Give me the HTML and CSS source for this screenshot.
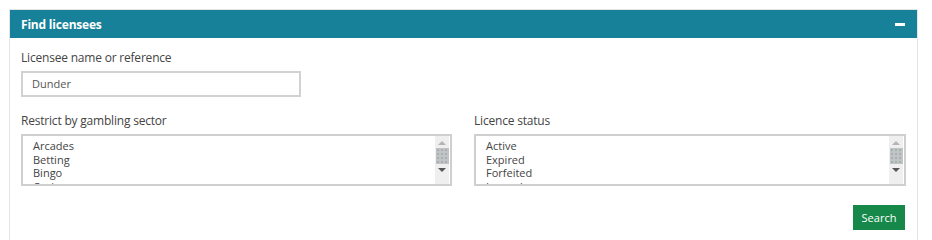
FILE: index.html
```html
<!DOCTYPE html>
<html lang="en">
<head>
<meta charset="utf-8">
<title>Find licensees</title>
<link rel="stylesheet" href="styles.css">
</head>
<body>
<div class="page">
  <section class="panel">
    <header class="panel-head">
      <h2 class="panel-title">Find licensees</h2>
      <span class="collapse" aria-label="Collapse"></span>
    </header>
    <div class="panel-body">
      <div class="field">
        <label class="label">Licensee name or reference</label>
        <div class="text-input">Dunder</div>
      </div>
      <div class="cols">
        <div class="field">
          <label class="label">Restrict by gambling sector</label>
          <div class="listbox">
            <ul class="options">
              <li>Arcades</li>
              <li>Betting</li>
              <li>Bingo</li>
              <li>Casino</li>
            </ul>
            <div class="scrollbar">
              <span class="arrow up"></span>
              <span class="thumb"></span>
              <span class="arrow down"></span>
            </div>
          </div>
        </div>
        <div class="field">
          <label class="label">Licence status</label>
          <div class="listbox">
            <ul class="options">
              <li>Active</li>
              <li>Expired</li>
              <li>Forfeited</li>
              <li>Lapsed</li>
            </ul>
            <div class="scrollbar">
              <span class="arrow up"></span>
              <span class="thumb"></span>
              <span class="arrow down"></span>
            </div>
          </div>
        </div>
      </div>
      <div class="actions">
        <button class="btn-search" type="button">Search</button>
      </div>
    </div>
  </section>
</div>
</body>
</html>
```

FILE: styles.css
```css
html, body {
  margin: 0;
  padding: 0;
  background: #ffffff;
}
body {
  font-family: "Open Sans", "Liberation Sans", sans-serif;
  color: #444;
}
.page {
  padding: 9px 14px 0 9px;
}
.panel {
  border: 1px solid #e4e4e4;
  border-bottom: none;
  height: 240px;
}
.panel-head {
  background: #168198;
  height: 28px;
  display: flex;
  align-items: center;
  justify-content: space-between;
  padding: 0 12px 0 11px;
}
.panel-title {
  margin: 0;
  color: #fff;
  font-size: 12px;
  font-weight: 700;
  letter-spacing: -0.2px;
}
.collapse {
  width: 10px;
  height: 3px;
  background: #fff;
}
.panel-body {
  padding: 11px 11px 0 11px;
}
.field {
  display: flex;
  flex-direction: column;
}
.label {
  font-size: 12px;
  color: #444;
  line-height: 18px;
  margin-bottom: 4px;
  letter-spacing: -0.2px;
}
.text-input {
  width: 280px;
  height: 26px;
  box-sizing: border-box;
  border: 2px solid #d2d2d2;
  padding: 0 9px;
  font-size: 11px;
  line-height: 22px;
  color: #555;
}
.cols {
  display: grid;
  grid-template-columns: 431px 432px;
  column-gap: 22px;
  margin-top: 15px;
}
.listbox {
  height: 52px;
  box-sizing: border-box;
  border: 2px solid #cfcfcf;
  display: flex;
  overflow: hidden;
}
.options {
  list-style: none;
  margin: 0;
  padding: 3px 0 0 10px;
  flex: 1;
  font-size: 11px;
  line-height: 13.5px;
  color: #444;
}
.scrollbar {
  width: 14px;
  margin-right: 1px;
  background: #efefef;
  display: flex;
  flex-direction: column;
  align-items: center;
}
.arrow {
  width: 0;
  height: 0;
  border-left: 4px solid transparent;
  border-right: 4px solid transparent;
}
.arrow.up {
  margin-top: 5px;
  border-bottom: 4px solid #b4b4b4;
}
.arrow.down {
  margin-top: 4px;
  border-top: 4px solid #555;
}
.thumb {
  margin-top: 3px;
  width: 13px;
  height: 16px;
  background-color: #c3c3c3;
  background-image: radial-gradient(#9fb0b8 0.7px, transparent 0.8px);
  background-size: 4px 4px;
}
.actions {
  display: flex;
  justify-content: flex-end;
  margin-top: 19px;
  padding-right: 1px;
}
.btn-search {
  width: 52px;
  height: 25px;
  border: none;
  background: #168849;
  color: #fff;
  font-family: "Open Sans", "Liberation Sans", sans-serif;
  font-size: 11px;
  padding: 0;
}
```
